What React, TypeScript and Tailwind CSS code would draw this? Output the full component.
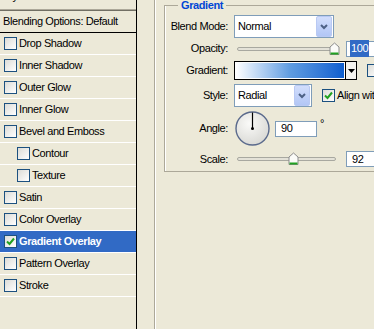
import React from "react";

const font = "font-['Liberation_Sans',Arial,sans-serif] text-[11px] tracking-[-0.4px]";

function CheckBox({ checked = false }: { checked?: boolean }) {
  return (
    <div className="flex h-[13px] w-[13px] shrink-0 items-center justify-center border border-[#1c5180] bg-gradient-to-br from-[#dcdcd7] to-white">
      {checked && (
        <svg width="9" height="9" viewBox="0 0 9 9">
          <path d="M1 4.5 L3.5 7 L8 1.5" fill="none" stroke="#21a121" strokeWidth="2" />
        </svg>
      )}
    </div>
  );
}

interface LayerRowProps {
  label: string;
  indent?: boolean;
  checked?: boolean;
  selected?: boolean;
}

function LayerRow({ label, indent, checked, selected }: LayerRowProps) {
  return (
    <div
      className={`flex h-[22px] items-center border-b border-white pb-[1px] ${
        indent ? "pl-[17px]" : "pl-[4px]"
      } ${selected ? "bg-[#316ac5] text-white font-bold" : "text-black"}`}
    >
      <CheckBox checked={checked} />
      <span className="ml-[2px]">{label}</span>
    </div>
  );
}

function Chevron() {
  return (
    <div className="mr-[1px] flex h-[21px] w-[16px] items-center justify-center rounded-[2px] border border-[#b9c9f3] bg-gradient-to-b from-[#d2defc] to-[#b2c6f5]">
      <svg width="8" height="6" viewBox="0 0 8 6">
        <path d="M1 1 L4 4 L7 1" fill="none" stroke="#4d6185" strokeWidth="2" />
      </svg>
    </div>
  );
}

function Select({ value, width }: { value: string; width: string }) {
  return (
    <div className={`flex h-[23px] ${width} items-center justify-between border border-[#7f9db9] bg-white pl-[3px]`}>
      <span>{value}</span>
      <Chevron />
    </div>
  );
}

function Thumb() {
  return (
    <svg width="11" height="14" viewBox="0 0 11 14" className="absolute -top-[6px]">
      <path d="M1 12.5 V5 L5.5 1 L10 5 V12.5 Z" fill="#fbfbf8" stroke="#8c8c8c" />
      <rect x="1.5" y="10.5" width="8" height="2" fill="#21a121" />
    </svg>
  );
}

function Slider({ thumbLeft }: { thumbLeft: string }) {
  return (
    <div className="relative ml-[3px] h-[4px] w-[99px] rounded-full border border-[#a8a8a0] bg-[#e4e2d8]">
      <div className={`absolute ${thumbLeft}`}>
        <Thumb />
      </div>
    </div>
  );
}

function Label({ text }: { text: string }) {
  return <div className="w-[64px] shrink-0 pr-[1px] text-right">{text}</div>;
}

export default function App() {
  return (
    <div className={`flex h-[329px] w-[374px] overflow-hidden bg-[#ece9d8] text-black ${font}`}>
      {/* Styles list */}
      <div className="flex w-[137px] shrink-0 flex-col border-r border-black">
        <div className="h-[9px] overflow-hidden">
          <div className="-mt-[13px] pl-[3px] leading-[18px]">Styles</div>
        </div>
        <div className="h-[1px] bg-[#aca899]" />
        <div className="h-[1px] bg-[#716f64]" />
        <div className="flex h-[22px] items-center border-b border-black pl-[3px]">
          Blending Options: Default
        </div>
        <LayerRow label="Drop Shadow" />
        <LayerRow label="Inner Shadow" />
        <LayerRow label="Outer Glow" />
        <LayerRow label="Inner Glow" />
        <LayerRow label="Bevel and Emboss" />
        <LayerRow label="Contour" indent />
        <LayerRow label="Texture" indent />
        <LayerRow label="Satin" />
        <LayerRow label="Color Overlay" />
        <LayerRow label="Gradient Overlay" checked selected />
        <LayerRow label="Pattern Overlay" />
        <LayerRow label="Stroke" />
      </div>

      <div className="w-[17px] shrink-0" />
      <div className="w-[1px] shrink-0 bg-[#aca899]" />
      <div className="w-[1px] shrink-0 bg-white" />

      {/* Gradient group */}
      <div className="flex-1 pl-[8px]">
        <fieldset className="-mt-[1px] w-[240px] border border-[#aca899] pb-[4px] shadow-[inset_1px_0_0_#fff]">
          <legend className="ml-[13px] px-[3px] font-bold leading-[13px] text-[#0046d5]">
            Gradient
          </legend>

          <div className="mt-[3px] flex h-[23px] items-center">
            <Label text="Blend Mode:" />
            <div className="ml-[5px]">
              <Select value="Normal" width="w-[100px]" />
            </div>
          </div>

          <div className="mt-[2px] flex h-[17px] items-center">
            <Label text="Opacity:" />
            <div className="ml-[5px] flex items-center">
              <Slider thumbLeft="left-[91px]" />
              <div className="ml-[10px] flex h-[16px] w-[40px] items-center border border-[#7f9db9] bg-white pl-[3px]">
                <span className="bg-[#316ac5] px-[1px] text-white">100</span>
              </div>
            </div>
          </div>

          <div className="mt-[4px] flex h-[19px] items-center">
            <Label text="Gradient:" />
            <div className="ml-[5px] flex h-[19px] w-[123px] border border-black">
              <div className="flex-1 border border-white bg-gradient-to-r from-white via-[#5f9ce0] to-[#0c5ecf]" />
              <div className="flex w-[11px] items-center justify-center border-l border-black bg-[#f4f3ee]">
                <svg width="7" height="4" viewBox="0 0 7 4">
                  <path d="M0 0 H7 L3.5 4 Z" fill="#000" />
                </svg>
              </div>
            </div>
            <div className="ml-[10px]">
              <CheckBox />
            </div>
          </div>

          <div className="mt-[4px] flex h-[23px] items-center">
            <Label text="Style:" />
            <div className="ml-[5px]">
              <Select value="Radial" width="w-[78px]" />
            </div>
            <div className="ml-[10px] flex items-center">
              <CheckBox checked />
              <span className="ml-[2px] whitespace-nowrap">Align with Layer</span>
            </div>
          </div>

          <div className="mt-[4px] flex h-[35px] items-center">
            <Label text="Angle:" />
            <div className="ml-[6px]">
              <svg width="35" height="35" viewBox="0 0 35 35">
                <defs>
                  <radialGradient id="dial" cx="40%" cy="35%" r="70%">
                    <stop offset="0%" stopColor="#fafaf8" />
                    <stop offset="100%" stopColor="#d8d8d4" />
                  </radialGradient>
                </defs>
                <circle cx="17.5" cy="17.5" r="16.5" fill="url(#dial)" stroke="#5a6a8c" strokeWidth="1.4" />
                <line x1="17.5" y1="17.5" x2="17.5" y2="1.5" stroke="#000" strokeWidth="1.2" />
                <circle cx="17.5" cy="17.5" r="1.5" fill="#000" />
              </svg>
            </div>
            <div className="ml-[5px] flex h-[16px] w-[42px] items-center border border-[#7f9db9] bg-white pl-[5px]">
              90
            </div>
            <span className="ml-[3px] self-start mt-[4px]">°</span>
          </div>

          <div className="mt-[5px] flex h-[16px] items-center">
            <Label text="Scale:" />
            <div className="ml-[5px] flex items-center">
              <Slider thumbLeft="left-[50px]" />
              <div className="ml-[10px] flex h-[16px] w-[40px] items-center border border-[#7f9db9] bg-white pl-[5px]">
                92
              </div>
            </div>
          </div>
        </fieldset>
      </div>
    </div>
  );
}
